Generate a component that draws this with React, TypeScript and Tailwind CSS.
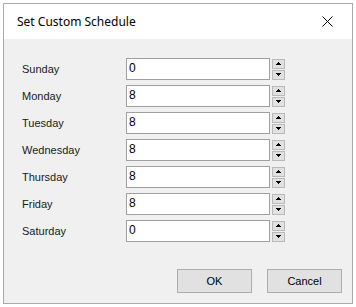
import React from 'react';

const days: [string, string][] = [
  ['Sunday', '0'],
  ['Monday', '8'],
  ['Tuesday', '8'],
  ['Wednesday', '8'],
  ['Thursday', '8'],
  ['Friday', '8'],
  ['Saturday', '0'],
];

const Spinner: React.FC = () => (
  <div className="flex flex-col gap-[1px] ml-[2px]">
    <div className="w-[13px] h-[10px] bg-[#e1e1e1] border border-[#b9b9b9] flex items-center justify-center">
      <svg width="5" height="3" viewBox="0 0 5 3" shapeRendering="crispEdges">
        <path d="M2 0h1v1h1v1h1v1H0V2h1V1h1z" fill="#000" />
      </svg>
    </div>
    <div className="w-[13px] h-[10px] bg-[#e1e1e1] border border-[#b9b9b9] flex items-center justify-center">
      <svg width="5" height="3" viewBox="0 0 5 3" shapeRendering="crispEdges">
        <path d="M0 0h5v1H4v1H3v1H2V2H1V1H0z" fill="#000" />
      </svg>
    </div>
  </div>
);

export default function App() {
  return (
    <div className="w-[356px] h-[307px] bg-white p-[3px] font-['Liberation_Sans',Arial,sans-serif]">
      <div className="w-[350px] h-[301px] border border-[#aaaaaa] flex flex-col bg-[#f0f0f0]">
        <div className="h-[35px] bg-white flex items-center justify-between pl-[13px] pr-[19px]">
          <span className="text-[12px] text-black font-['Segoe_UI','Noto_Sans',sans-serif]">Set Custom Schedule</span>
          <svg width="11" height="11" viewBox="0 0 11 11" className="text-black">
            <path d="M0.5 0.5L10.5 10.5M10.5 0.5L0.5 10.5" stroke="currentColor" strokeWidth="1" />
          </svg>
        </div>
        <div className="flex flex-col gap-[5px] pl-[18px] pt-[19px]">
          {days.map(([day, val]) => (
            <div key={day} className="flex items-center h-[22px]">
              <span className="w-[104px] text-[11px] text-[#1a1a1a] pt-[1px]">{day}</span>
              <div className="w-[144px] h-[22px] bg-white border border-[#a0a0a0] pl-[2px] text-[12px] leading-[18px] text-black">
                {val}
              </div>
              <Spinner />
            </div>
          ))}
        </div>
        <div className="flex justify-end gap-[15px] mt-auto pb-[10px] pr-[10px]">
          <button className="w-[75px] h-[24px] bg-[#e1e1e1] border border-[#adadad] text-[11px] text-black">OK</button>
          <button className="w-[75px] h-[24px] bg-[#e1e1e1] border border-[#adadad] text-[11px] text-black">Cancel</button>
        </div>
      </div>
    </div>
  );
}
